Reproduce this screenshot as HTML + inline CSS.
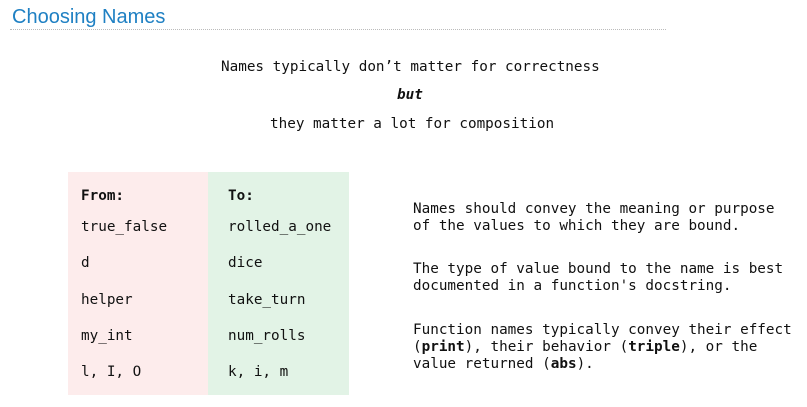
<!DOCTYPE html>
<html><head><meta charset="utf-8"><style>
*{margin:0;padding:0}
body{width:807px;height:407px;background:#fff;position:relative;overflow:hidden;font-family:"DejaVu Sans Mono","Liberation Mono",monospace;font-size:14.3px;color:#111}
.t{position:absolute;white-space:pre;line-height:17px}
h1{position:absolute;left:12px;top:6px;font:20px "Liberation Sans",sans-serif;color:#1f80c3;font-weight:normal}
.line{position:absolute;left:10px;top:29px;width:656px;border-top:1px dotted #bbb}
.pink{position:absolute;left:68px;top:172px;width:140px;height:223px;background:#fdecec}
.green{position:absolute;left:208px;top:172px;width:141px;height:223px;background:#e2f3e6}
b{font-weight:bold}
</style></head><body>
<h1>Choosing Names</h1>
<div class="line"></div>
<div class="t" style="left:221px;top:59px">Names typically don’t matter for correctness</div>
<div class="t" style="left:397px;top:87px"><b><i>but</i></b></div>
<div class="t" style="left:270px;top:116px">they matter a lot for composition</div>
<div class="pink"></div><div class="green"></div>
<div class="t" style="left:81px;top:188px"><b>From:</b></div>
<div class="t" style="left:81px;top:219px">true_false</div>
<div class="t" style="left:81px;top:255px">d</div>
<div class="t" style="left:81px;top:292px">helper</div>
<div class="t" style="left:81px;top:328px">my_int</div>
<div class="t" style="left:81px;top:364px">l, I, O</div>
<div class="t" style="left:228px;top:188px"><b>To:</b></div>
<div class="t" style="left:228px;top:219px">rolled_a_one</div>
<div class="t" style="left:228px;top:255px">dice</div>
<div class="t" style="left:228px;top:292px">take_turn</div>
<div class="t" style="left:228px;top:328px">num_rolls</div>
<div class="t" style="left:228px;top:364px">k, i, m</div>
<div class="t" style="left:413px;top:201px">Names should convey the meaning or purpose
of the values to which they are bound.</div>
<div class="t" style="left:413px;top:261px">The type of value bound to the name is best
documented in a function's docstring.</div>
<div class="t" style="left:413px;top:322px">Function names typically convey their effect
(<b>print</b>), their behavior (<b>triple</b>), or the
value returned (<b>abs</b>).</div>
</body></html>
